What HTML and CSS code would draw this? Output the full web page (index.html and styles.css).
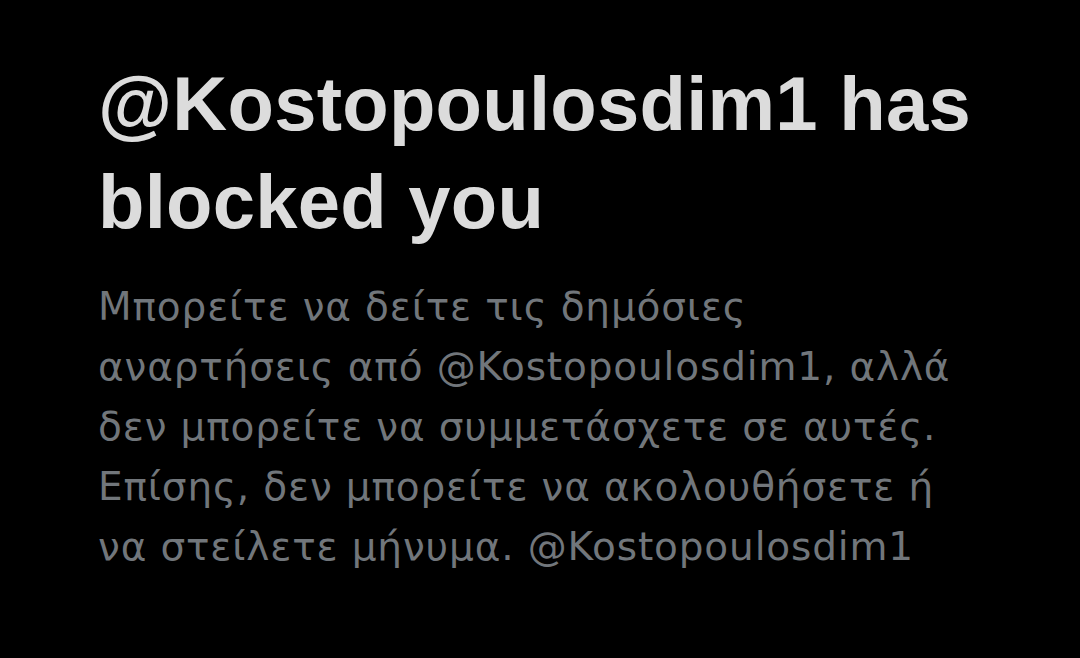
FILE: index.html
```html
<!DOCTYPE html>
<html lang="el">
<head>
<meta charset="utf-8">
<link rel="stylesheet" href="styles.css">
</head>
<body>
<main class="blocked">
  <h1 class="blocked-title">@Kostopoulosdim1 has blocked you</h1>
  <p class="blocked-text">Μπορείτε να δείτε τις δημόσιες αναρτήσεις από @Kostopoulosdim1, αλλά δεν μπορείτε να συμμετάσχετε σε αυτές. Επίσης, δεν μπορείτε να ακολουθήσετε ή να στείλετε μήνυμα. @Kostopoulosdim1</p>
</main>
</body>
</html>
```
FILE: styles.css
```css
html, body {
  margin: 0;
  padding: 0;
  background: #000000;
  width: 1080px;
  height: 658px;
  overflow: hidden;
}
.blocked {
  display: flex;
  flex-direction: column;
  gap: 26px;
  padding: 55px 0 0 98px;
  width: 880px;
}
.blocked-title {
  margin: 0;
  font-family: "Liberation Sans", Arial, sans-serif;
  font-weight: 700;
  font-size: 76px;
  line-height: 98px;
  color: #dcdcdc;
  letter-spacing: 0.25px;
}
.blocked-text {
  margin: 0;
  width: 870px;
  font-family: "DejaVu Sans", sans-serif;
  font-weight: 400;
  font-size: 39px;
  line-height: 60px;
  letter-spacing: 0.85px;
  color: #71767b;
}
```
